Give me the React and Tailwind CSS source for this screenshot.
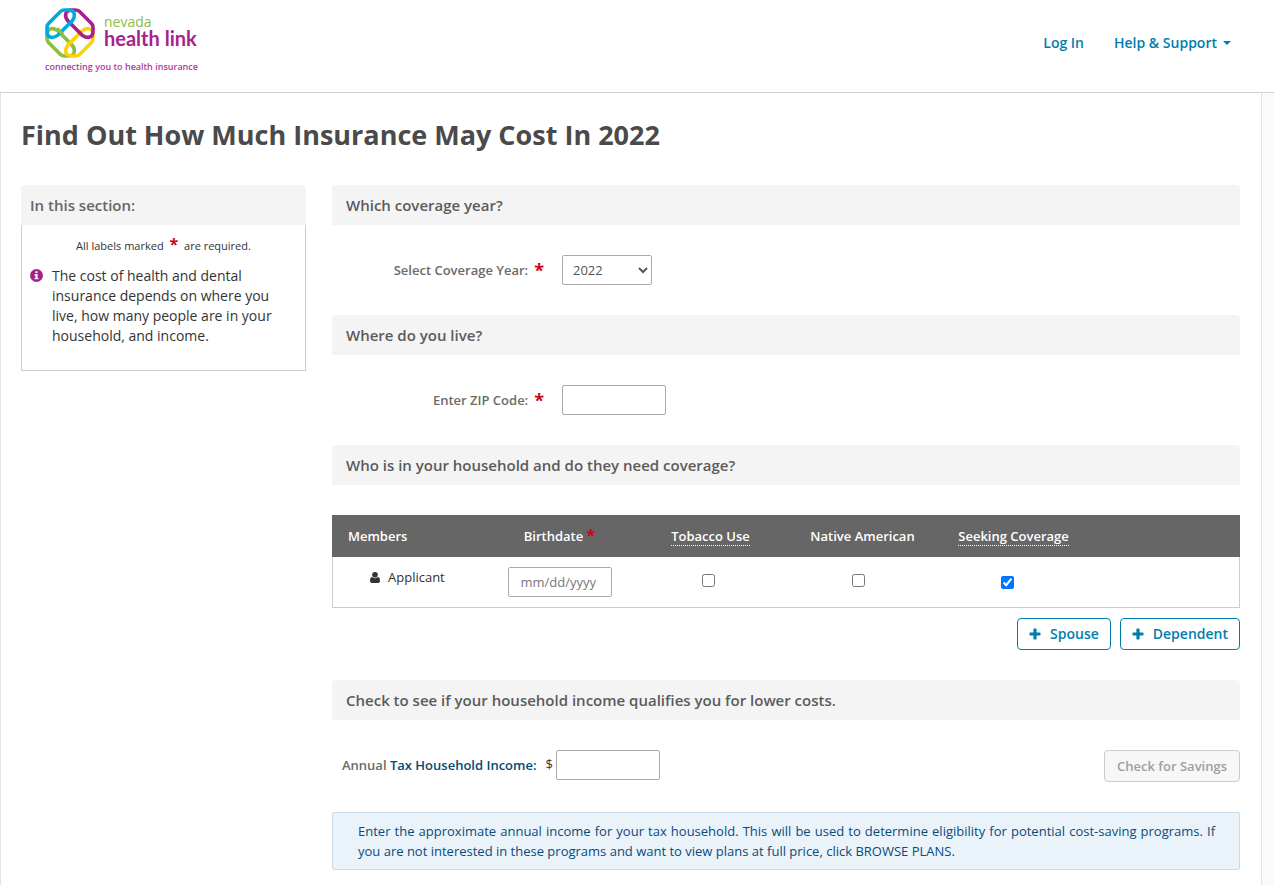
import React, { useState } from 'react';

const rings = [
  { color: '#8dbe3f', angle: 270 },
  { color: '#fdd20a', angle: 180 },
  { color: '#a6228c', angle: 90 },
  { color: '#00a9e0', angle: 0 }
];

const ringPath = 'M3.5 15.5 L15.5 3.5 Q17 2 19.5 2 H23 Q28.5 2 29.3 6 Q29.8 9 27.5 12.5 L13 27 Q9.5 30 6 29.3 Q2 28.5 2 23 V19.5 Q2 17 3.5 15.5 Z';

function Logo() {
  return (
    <a href="#home" aria-label="Nevada Health Link" className="block w-40 pl-1">
      <span className="flex gap-[9px]">
        <svg viewBox="0 0 50 50" className="h-[50px] w-[50px] shrink-0" fill="none">
          {rings.map(ring => (
            <path
              key={ring.color}
              d={ringPath}
              stroke={ring.color}
              strokeWidth="3.6"
              transform={`rotate(${ring.angle} 25 25)`}
            />
          ))}
          {/* green passes back over blue so the four links interlock */}
          <path d="M12 20.5 L18 26.5" stroke="#8dbe3f" strokeWidth="3.6" />
        </svg>
        <span className="block pt-1.5 text-[#a6228c]">
          <span className="block text-sm leading-4 text-[#8dbe3f]">nevada</span>
          <span className="block whitespace-nowrap font-['Lato',sans-serif] text-xl leading-4 font-bold">health link</span>
        </span>
      </span>
      <span className="block whitespace-nowrap pt-px text-[9px] leading-4 font-semibold text-[#b03a9b]">
        connecting you to health insurance
      </span>
    </a>
  );
}

function Required({ className = '' }) {
  return <span className={`text-[#d0021b] font-bold ${className}`}>*</span>;
}

function SectionTitle({ children }) {
  return (
    <h2 className="rounded-t bg-[#f4f4f4] px-3.5 text-[15px] leading-10 font-semibold text-[#5b5b5b]">
      {children}
    </h2>
  );
}

function PlusIcon() {
  return (
    <svg viewBox="0 0 12 12" className="h-3 w-3" fill="currentColor">
      <path d="M4.4 1.2q0-.7.7-.7h1.8q.7 0 .7.7v3.2h3.2q.7 0 .7.7v1.8q0 .7-.7.7H7.6v3.2q0 .7-.7.7H5.1q-.7 0-.7-.7V7.6H1.2q-.7 0-.7-.7V5.1q0-.7.7-.7h3.2z" />
    </svg>
  );
}

const inputClass = 'h-[30px] w-[104px] rounded-xs border border-[#aaa] bg-white px-3 text-[13px] text-[#555] placeholder:text-[#777]';
const addButtonClass = 'flex h-8 items-center gap-[9px] rounded border border-[#007eab] px-[11px] text-sm font-semibold text-[#007eab] cursor-pointer';
const checkboxClass = 'mx-auto block h-[13px] w-[13px]';

export default function App() {
  const [year, setYear] = useState('2022');
  const [zip, setZip] = useState('');
  const [birthdate, setBirthdate] = useState('');
  const [income, setIncome] = useState('');

  return (
    <div className="min-h-screen bg-white font-['Open_Sans',sans-serif] text-[13px] leading-5 text-[#333]">
      <header className="flex items-start justify-between border-b border-[#d2d2d2] pt-2 pr-[43px] pb-[17px] pl-[41px]">
        <Logo />
        <nav className="flex gap-[30px] pt-[25px] text-sm font-semibold text-[#007eab]">
          <a href="#login">Log In</a>
          <a href="#help" className="flex items-center gap-1.5">
            Help &amp; Support
            <svg viewBox="0 0 8 4" className="h-1 w-2" fill="currentColor">
              <path d="M0 0h8L4 4z" />
            </svg>
          </a>
        </nav>
      </header>

      <div className="bg-[#fafafa] pr-3">
        <main className="border-x border-[#e3e3e3] bg-white pt-6 pr-[21px] pb-4 pl-5">
          <h1 className="text-[27px] leading-9 font-bold text-[#4a4a4a]">
            Find Out How Much Insurance May Cost In 2022
          </h1>

          <div className="mt-8 flex items-start gap-[26px]">
            <aside className="w-[285px] shrink-0">
              <h2 className="rounded-t bg-[#f4f4f4] px-[9px] text-[15px] leading-10 font-semibold text-[#666]">
                In this section:
              </h2>
              <div className="border border-t-0 border-[#ccc] px-2 pt-[11px] pb-6">
                <p className="text-center text-[11px]">
                  All labels marked <Required className="mx-[3px] text-base leading-4" /> are required.
                </p>
                <div className="mt-2.5 flex gap-[9px]">
                  <svg viewBox="0 0 12 12" className="mt-[3px] h-[13px] w-[13px] shrink-0">
                    <circle cx="6" cy="6" r="6" fill="#a6228c" />
                    <path d="M5 2h2v1.7H5zM4.3 4.7H7v3.6h.8v1.2H4.2V8.3H5V5.9h-.7z" fill="#fff" />
                  </svg>
                  <p className="max-w-[225px] text-sm leading-5">
                    The cost of health and dental insurance depends on where you live, how many people are in your
                    household, and income.
                  </p>
                </div>
              </div>
            </aside>

            <form className="min-w-0 flex-1" onSubmit={event => event.preventDefault()}>
              <SectionTitle>Which coverage year?</SectionTitle>
              <div className="flex items-center gap-[18px] py-[30px]">
                <label htmlFor="year" className="flex w-[212px] justify-end gap-1.5 font-semibold text-[#6b6b6b]">
                  Select Coverage Year: <Required className="text-lg leading-5" />
                </label>
                <select
                  id="year"
                  value={year}
                  onChange={event => setYear(event.target.value)}
                  className="h-[30px] w-[90px] rounded-xs border border-[#aaa] bg-white px-1.5 text-[13px] text-[#555]"
                >
                  <option>2022</option>
                  <option>2021</option>
                </select>
              </div>

              <SectionTitle>Where do you live?</SectionTitle>
              <div className="flex items-center gap-[18px] py-[30px]">
                <label htmlFor="zip" className="flex w-[212px] justify-end gap-1.5 font-semibold text-[#6b6b6b]">
                  Enter ZIP Code: <Required className="text-lg leading-5" />
                </label>
                <input id="zip" value={zip} onChange={event => setZip(event.target.value)} className={inputClass} />
              </div>

              <SectionTitle>Who is in your household and do they need coverage?</SectionTitle>
              <table className="mt-[30px] w-full table-fixed border-collapse text-center">
                <thead className="border border-[#666] bg-[#666] text-white">
                  <tr className="h-[41px]">
                    <th className="w-[152px] pl-[15px] text-left font-semibold">Members</th>
                    <th className="w-[150px] font-semibold">
                      Birthdate <Required className="text-base leading-4" />
                    </th>
                    <th className="w-[152px] font-semibold">
                      <span className="inline-block border-b border-dotted border-white leading-[18px]">Tobacco Use</span>
                    </th>
                    <th className="w-[152px] font-semibold">Native American</th>
                    <th className="w-[150px] font-semibold">
                      <span className="inline-block border-b border-dotted border-white leading-[18px]">Seeking Coverage</span>
                    </th>
                    <td />
                  </tr>
                </thead>
                <tbody className="border border-t-0 border-[#ccc]">
                  <tr className="h-[51px]">
                    <td className="pb-2.5 pl-[37px] text-left">
                      <span className="flex items-center gap-2">
                        <svg viewBox="0 0 10 11" className="h-[11px] w-2.5" fill="currentColor">
                          <circle cx="5" cy="2.8" r="2.8" />
                          <path d="M2.2 5Q5 7.4 7.8 5 10 5.3 10 9q0 2-2 2H2q-2 0-2-2 0-3.7 2.2-4z" />
                        </svg>
                        Applicant
                      </span>
                    </td>
                    <td>
                      <input
                        aria-label="Birthdate"
                        placeholder="mm/dd/yyyy"
                        value={birthdate}
                        onChange={event => setBirthdate(event.target.value)}
                        className={inputClass}
                      />
                    </td>
                    <td className="pr-1 pb-1">
                      <input type="checkbox" aria-label="Tobacco Use" className={checkboxClass} />
                    </td>
                    <td className="pr-2 pb-1">
                      <input type="checkbox" aria-label="Native American" className={checkboxClass} />
                    </td>
                    <td className="pr-3">
                      <input type="checkbox" aria-label="Seeking Coverage" defaultChecked className={checkboxClass} />
                    </td>
                    <td />
                  </tr>
                </tbody>
              </table>

              <div className="mt-2.5 mb-[30px] flex justify-end gap-[9px]">
                <button type="button" className={addButtonClass}><PlusIcon />Spouse</button>
                <button type="button" className={addButtonClass}><PlusIcon />Dependent</button>
              </div>

              <SectionTitle>Check to see if your household income qualifies you for lower costs.</SectionTitle>
              <div className="flex items-start justify-between py-[30px] pl-2.5">
                <div className="flex items-center">
                  <label htmlFor="income" className="font-semibold text-[#6b6b6b]">
                    Annual <span className="text-[#024b72]">Tax Household Income:</span>
                  </label>
                  <span className="pr-[3px] pb-0.5 pl-[9px]">$</span>
                  <input id="income" value={income} onChange={event => setIncome(event.target.value)} className={inputClass} />
                </div>
                <button disabled className="h-8 rounded border border-[#ccc] bg-[#f7f7f7] px-3 text-[13px] font-semibold text-[#a0a0a0]">
                  Check for Savings
                </button>
              </div>

              <p className="rounded-xs border border-[#c9dcea] bg-[#eaf3fa] px-6 py-2 pl-[25px] text-justify text-[13px] leading-5 text-[#0b4a7c]">
                Enter the approximate annual income for your tax household. This will be used to determine eligibility
                for potential cost-saving programs. If you are not interested in these programs and want to view plans
                at full price, click BROWSE PLANS.
              </p>
            </form>
          </div>
        </main>
      </div>
    </div>
  );
}
